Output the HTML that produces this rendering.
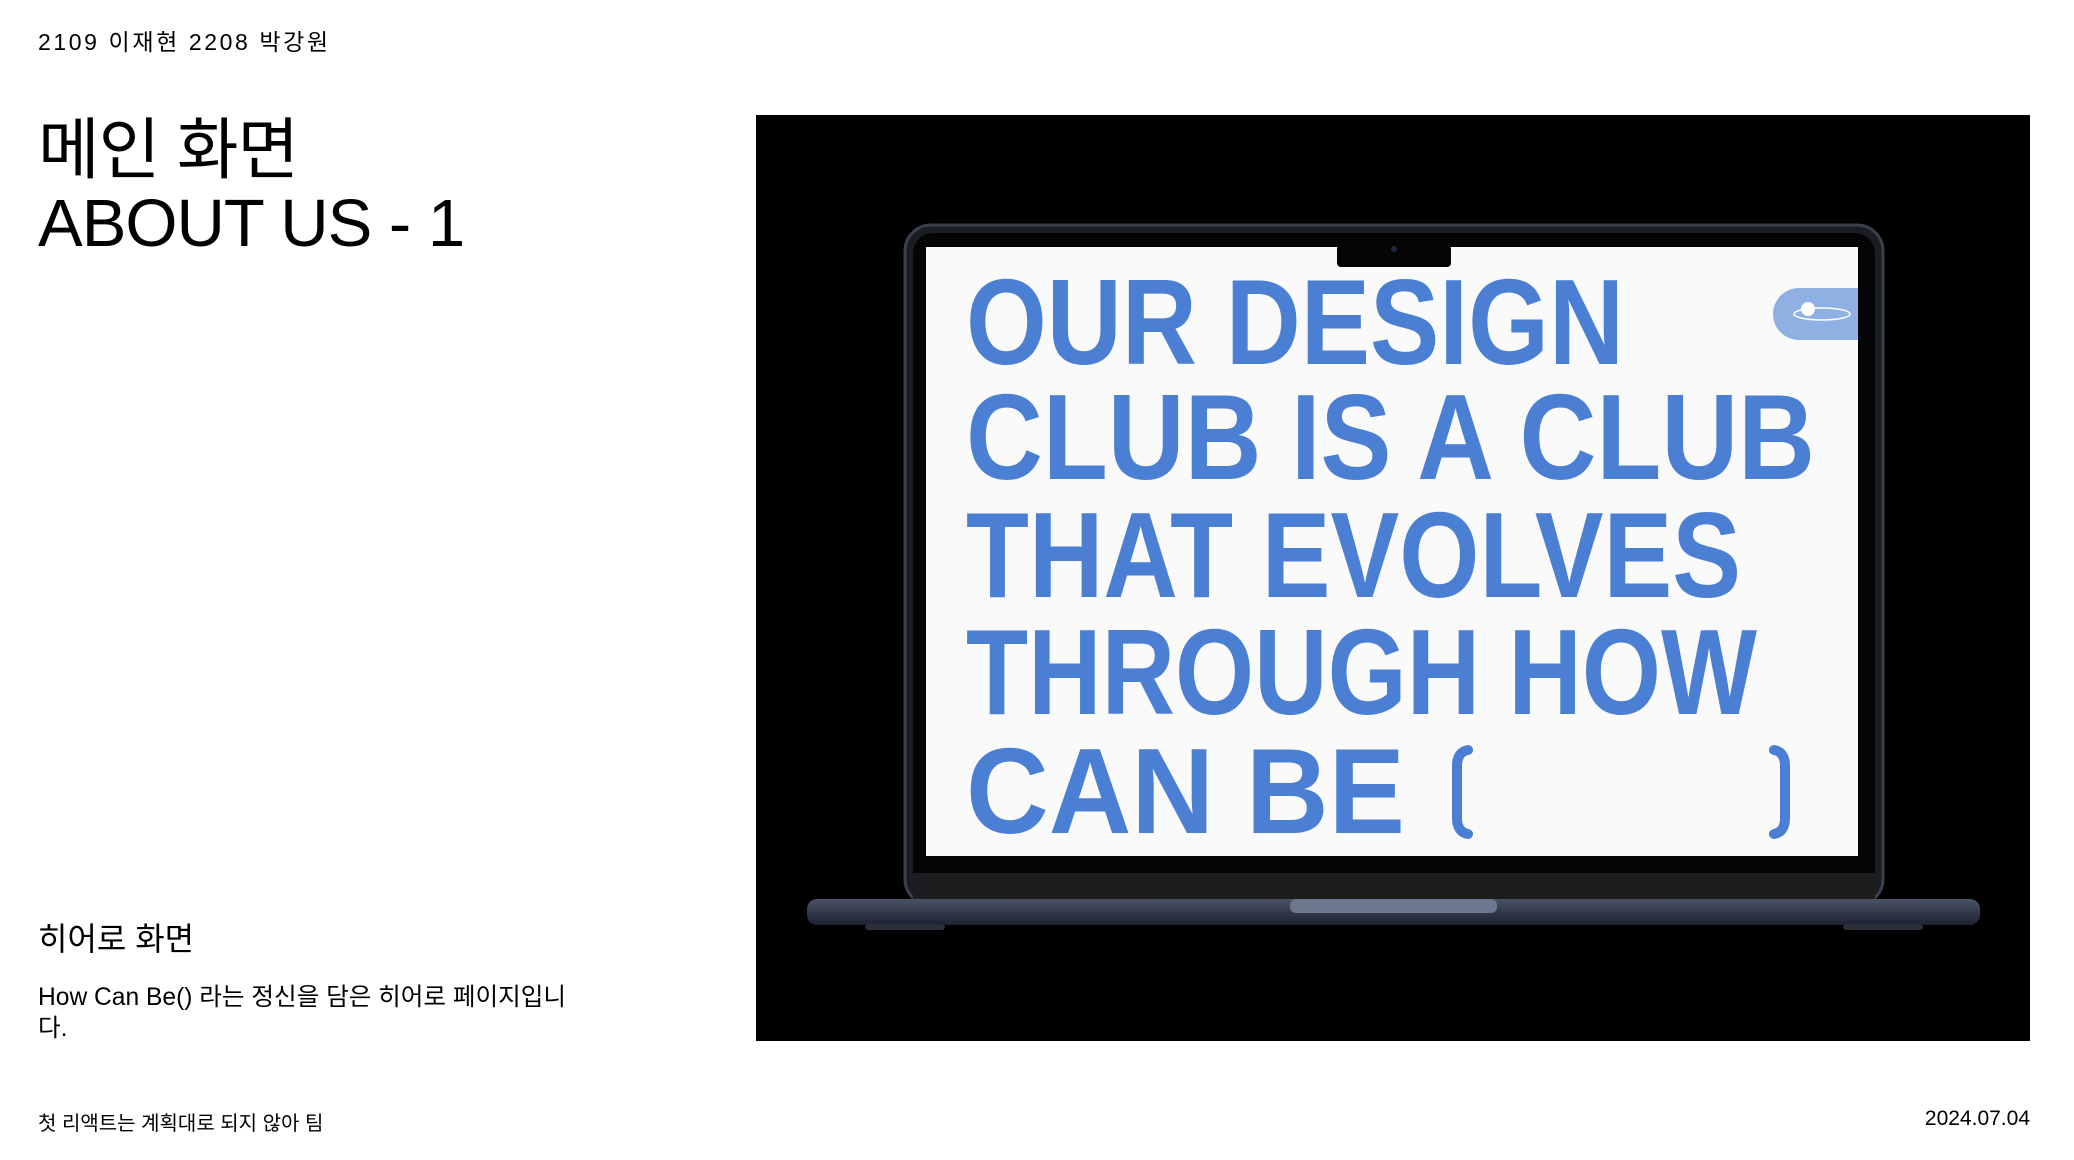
<!DOCTYPE html>
<html><head><meta charset="utf-8"><style>
html,body{margin:0;padding:0;background:#fff;}
body{width:2074px;height:1160px;position:relative;overflow:hidden;font-family:"Liberation Sans","Noto Sans CJK KR",sans-serif;color:#000;}
.a{position:absolute;white-space:nowrap;}
</style></head><body>
<div class="a" style="left:38px;top:23px;font-size:23px;letter-spacing:2.6px;">2109 이재현 2208 박강원</div>
<div class="a" style="left:38px;top:114px;font-size:67px;line-height:73px;letter-spacing:-1px;">메인 화면<br>ABOUT US - 1</div>
<div class="a" style="left:38px;top:914px;font-size:32px;">히어로 화면</div>
<div class="a" style="left:38px;top:982px;font-size:24.6px;line-height:31px;white-space:normal;width:600px;">How Can Be() 라는 정신을 담은 히어로 페이지입니<br>다.</div>
<div class="a" style="left:38px;top:1107px;font-size:20px;">첫 리액트는 계획대로 되지 않아 팀</div>
<div class="a" style="right:44px;top:1107px;font-size:21px;">2024.07.04</div>

<div class="a" style="left:756px;top:115px;width:1274px;height:926px;background:#000;"></div>
<svg class="a" style="left:0;top:0" width="2074" height="1160">
  <defs>
    <linearGradient id="b" x1="0" y1="0" x2="0" y2="1"><stop offset="0" stop-color="#4a5366"/><stop offset="1" stop-color="#1c2230"/></linearGradient>
  </defs>
  <rect x="905" y="225" width="978" height="680" rx="26" fill="#1a1d24" stroke="#3a404c" stroke-width="3"/>
  <rect x="913" y="233" width="962" height="670" rx="20" fill="#050505"/>
  <rect x="913" y="873" width="962" height="26" fill="#1d1d1f"/>
  <rect x="807" y="899" width="1173" height="26" rx="10" fill="url(#b)"/>
  <rect x="1290" y="899" width="207" height="14" rx="6" fill="#6b788d"/>
  <rect x="865" y="924" width="80" height="6" rx="3" fill="#2a2f38"/>
  <rect x="1843" y="924" width="80" height="6" rx="3" fill="#2a2f38"/>
  <rect x="926" y="247" width="932" height="609" fill="#fafafa"/>
  <rect x="1337" y="245" width="114" height="22" rx="4" fill="#050505"/>
  <circle cx="1394" cy="249" r="3" fill="#1e2a44"/>
  <path d="M1799 288 H1858 V340 H1799 A26 26 0 0 1 1799 288 Z" fill="#8fb0e3"/>
  <ellipse cx="1822" cy="314" rx="28" ry="6" fill="none" stroke="#fff" stroke-width="1.5"/>
  <circle cx="1808" cy="309" r="7" fill="#fff"/>
  <g fill="#4a7fd4" font-family="Liberation Sans Narrow, Liberation Sans, sans-serif" font-weight="bold" font-size="122">
    <text x="966" y="364" textLength="658" lengthAdjust="spacingAndGlyphs">OUR DESIGN</text>
    <text x="966" y="479" textLength="849" lengthAdjust="spacingAndGlyphs">CLUB IS A CLUB</text>
    <text x="966" y="597" textLength="775" lengthAdjust="spacingAndGlyphs">THAT EVOLVES</text>
    <text x="966" y="714" textLength="791" lengthAdjust="spacingAndGlyphs">THROUGH HOW</text>
    <text x="966" y="833" textLength="439" lengthAdjust="spacingAndGlyphs">CAN BE</text>
  </g>
  <g fill="none" stroke="#4a7fd4" stroke-width="10" stroke-linecap="round">
    <path d="M1468 750 Q1457 752 1457 766 V818 Q1457 832 1468 834"/>
    <path d="M1774 750 Q1785 752 1785 766 V818 Q1785 832 1774 834"/>
  </g>
</svg>
</body></html>
